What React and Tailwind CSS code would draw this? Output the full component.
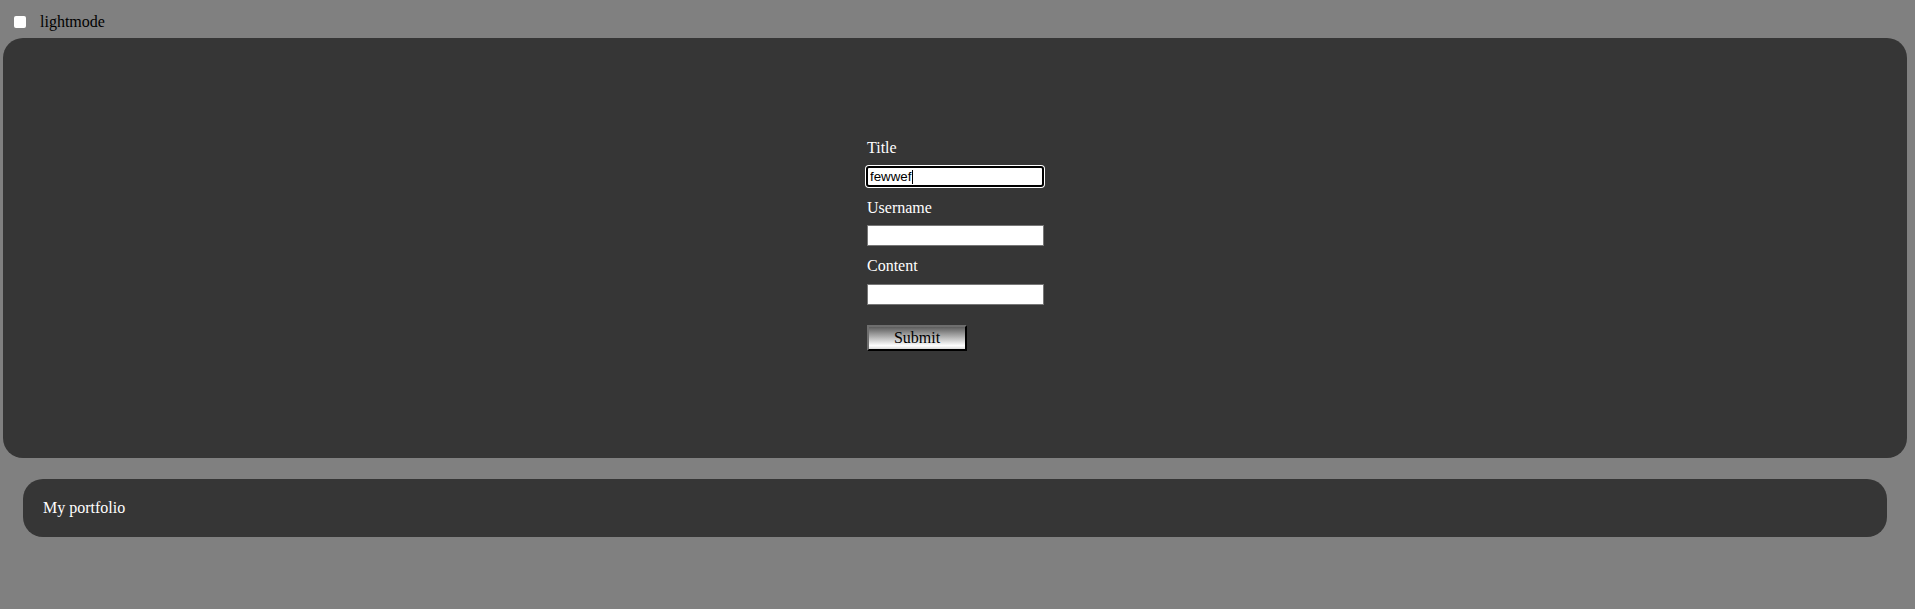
import React, { useState } from 'react';

export default function App() {
    const [title, setTitle] = useState('fewwef');
    const [username, setUsername] = useState('');
    const [content, setContent] = useState('');
    const [light, setLight] = useState(false);

    const handleSubmit = (e) => {
        e.preventDefault();
    };

    return (
        <div className="min-h-[609px] bg-[#808080] font-['Liberation_Serif',serif] text-[16px] leading-[18px] text-black">
            <div className="flex h-[38px] items-center pl-[14px] pt-[6px]">
                <input
                    type="checkbox"
                    checked={light}
                    onChange={(e) => setLight(e.target.checked)}
                    className="m-0 h-[12px] w-[12px] appearance-none rounded-[2px] bg-white"
                />
                <label className="ml-[14px]">lightmode</label>
            </div>

            <div className="ml-[3px] mr-[8px] flex h-[420px] justify-center rounded-[20px] bg-[#363636] pt-[98px]">
                <form onSubmit={handleSubmit} className="ml-[2px] flex w-[178px] flex-col items-start text-white">
                    <label className="block h-[18px] pt-[3px]">Title</label>
                    <div className="relative mt-[12px] mb-[9px] -ml-[1px]">
                        <input
                            type="text"
                            value={title}
                            onChange={(e) => setTitle(e.target.value)}
                            className="block h-[21px] w-[178px] rounded-[3px] border-2 border-black bg-white px-[2px] font-['Liberation_Sans',sans-serif] text-[13.33px] text-black shadow-[0_0_0_1px_white] outline-none"
                        />
                        <span className="absolute left-[46px] top-[4px] h-[14px] w-[1px] bg-black" />
                    </div>
                    <label className="block h-[18px] pt-[3px]">Username</label>
                    <input
                        type="text"
                        value={username}
                        onChange={(e) => setUsername(e.target.value)}
                        className="mt-[11px] mb-[8px] h-[21px] w-[177px] border border-[#767676] bg-white px-[2px] font-['Liberation_Sans',sans-serif] text-[13.33px] text-black outline-none"
                    />
                    <label className="block h-[18px] pt-[3px]">Content</label>
                    <input
                        type="text"
                        value={content}
                        onChange={(e) => setContent(e.target.value)}
                        className="mt-[12px] h-[21px] w-[177px] border border-[#767676] bg-white px-[2px] font-['Liberation_Sans',sans-serif] text-[13.33px] text-black outline-none"
                    />
                    <button
                        type="submit"
                        className="mt-[20px] h-[26px] w-[100px] border-2 border-t-[#6e6e6e] border-l-[#6e6e6e] border-r-black border-b-black bg-[linear-gradient(to_bottom,#5c5c5c,#ffffff_85%,#d8d8d8)] text-center leading-[20px] text-black"
                    >
                        Submit
                    </button>
                </form>
            </div>

            <div className="mt-[21px] ml-[23px] mr-[28px] flex h-[58px] items-center rounded-[20px] bg-[#363636] pl-[20px] text-white">
                My portfolio
            </div>
        </div>
    );
}
